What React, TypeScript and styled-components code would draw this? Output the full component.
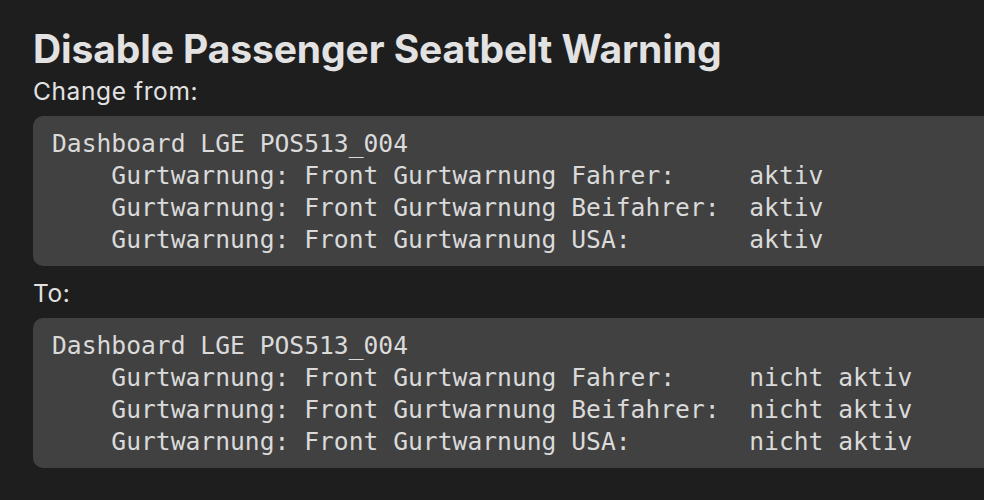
import React from "react";
import styled, { createGlobalStyle } from "styled-components";

const Global = createGlobalStyle`
  html, body { margin: 0; padding: 0; background: #1e1e1e; overflow: hidden; }
  body { width: 984px; height: 500px; }
`;

const Page = styled.div`
  display: flex;
  flex-direction: column;
  padding: 26px 0 0 33px;
  width: 984px;
  height: 500px;
  box-sizing: border-box;
  color: #e2e2e2;
  font-family: Inter, "Noto Sans", sans-serif;
`;

const Title = styled.h1`
  margin: 0;
  font-size: 39px;
  font-weight: 700;
  line-height: 46px;
  letter-spacing: -0.1px;
`;

const Label = styled.div<{ $top: number }>`
  margin-top: ${(p) => p.$top}px;
  font-size: 24.5px;
  line-height: 30px;
  font-weight: 400;
  letter-spacing: 0.6px;
`;

const CodeBox = styled.pre`
  margin: 10px -40px 0 0;
  padding: 12px 0 10px 19px;
  background: #414141;
  border-radius: 10px;
  font-family: "DejaVu Sans Mono", "Liberation Mono", monospace;
  font-size: 24.65px;
  line-height: 32px;
  color: #dadada;
  white-space: pre;
`;

const before = `Dashboard LGE POS513_004
    Gurtwarnung: Front Gurtwarnung Fahrer:     aktiv
    Gurtwarnung: Front Gurtwarnung Beifahrer:  aktiv
    Gurtwarnung: Front Gurtwarnung USA:        aktiv`;

const after = `Dashboard LGE POS513_004
    Gurtwarnung: Front Gurtwarnung Fahrer:     nicht aktiv
    Gurtwarnung: Front Gurtwarnung Beifahrer:  nicht aktiv
    Gurtwarnung: Front Gurtwarnung USA:        nicht aktiv`;

export default function App() {
  return (
    <>
      <Global />
      <Page>
        <Title>Disable Passenger Seatbelt Warning</Title>
        <Label $top={4}>Change from:</Label>
        <CodeBox>{before}</CodeBox>
        <Label $top={12}>To:</Label>
        <CodeBox>{after}</CodeBox>
      </Page>
    </>
  );
}
